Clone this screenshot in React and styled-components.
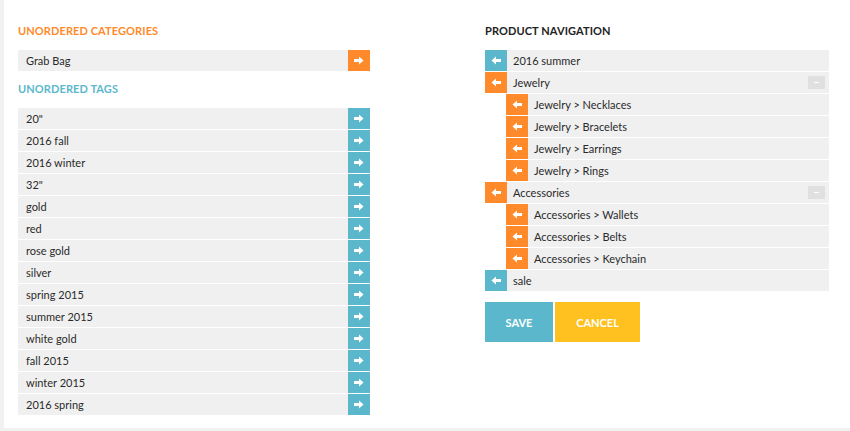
import React from 'react';
import styled, { createGlobalStyle } from 'styled-components';

const GlobalStyle = createGlobalStyle`
  body {
    margin: 0;
    background: #f1f1f1;
    font-family: Lato, "Open Sans", Arial, sans-serif;
  }
`;

const BLUE = '#5bb8cc';
const ORANGE = '#ff8a2b';
const YELLOW = '#ffc11f';

const Panel = styled.div`
  margin-left: 4px;
  height: 428px;
  background: #fff;
  display: flex;
  padding-top: 24px;
  box-sizing: border-box;
`;

const Column = styled.div`
  width: ${p => p.$width}px;
  margin-left: ${p => p.$offset}px;
  display: flex;
  flex-direction: column;
`;

const Heading = styled.h2`
  margin: ${p => p.$top || 0}px 0 12px 0;
  font-size: 11px;
  line-height: 14px;
  font-weight: 700;
  text-transform: uppercase;
  color: ${p => p.$color};
  letter-spacing: 0.1px;
`;

const List = styled.div`
  display: flex;
  flex-direction: column;
  gap: 1px;
`;

const Row = styled.div`
  display: flex;
  align-items: center;
  height: 21px;
  background: #f0f0f0;
  font-size: 11px;
  color: #2a2a2a;
  margin-left: ${p => (p.$indent ? 21 : 0)}px;
`;

const Label = styled.span`
  flex: 1;
  padding-left: ${p => p.$pad}px;
  white-space: nowrap;
`;

const ArrowBtn = styled.div`
  width: 22px;
  height: 21px;
  background: ${p => p.$color};
  display: flex;
  align-items: center;
  justify-content: center;
  flex: none;
`;

const Collapse = styled.div`
  width: 17px;
  height: 13px;
  background: #e0e0e0;
  margin-right: 4px;
  display: flex;
  align-items: center;
  justify-content: center;
  &::after {
    content: '';
    width: 5px;
    height: 1px;
    background: #fff;
  }
`;

const Actions = styled.div`
  display: flex;
  gap: 2px;
  margin-top: 11px;
`;

const ActionBtn = styled.button`
  height: 40px;
  width: ${p => p.$w}px;
  border: none;
  background: ${p => p.$color};
  color: #fff;
  font-family: Lato, Arial, sans-serif;
  font-size: 11px;
  font-weight: 700;
  text-transform: uppercase;
  padding: 0;
`;

const Arrow = ({ dir }) => (
  <svg width="10" height="9" viewBox="0 0 10 9">
    {dir === 'right' ? (
      <polygon points="0,3 5,3 5,0.5 9.5,4.5 5,8.5 5,6 0,6" fill="#fff" />
    ) : (
      <polygon points="10,3 5,3 5,0.5 0.5,4.5 5,8.5 5,6 10,6" fill="#fff" />
    )}
  </svg>
);

const tags = [
  '20"', '2016 fall', '2016 winter', '32"', 'gold', 'red', 'rose gold',
  'silver', 'spring 2015', 'summer 2015', 'white gold', 'fall 2015',
  'winter 2015', '2016 spring',
];

const nav = [
  { name: '2016 summer', color: BLUE },
  { name: 'Jewelry', color: ORANGE, parent: true },
  { name: 'Jewelry > Necklaces', color: ORANGE, child: true },
  { name: 'Jewelry > Bracelets', color: ORANGE, child: true },
  { name: 'Jewelry > Earrings', color: ORANGE, child: true },
  { name: 'Jewelry > Rings', color: ORANGE, child: true },
  { name: 'Accessories', color: ORANGE, parent: true },
  { name: 'Accessories > Wallets', color: ORANGE, child: true },
  { name: 'Accessories > Belts', color: ORANGE, child: true },
  { name: 'Accessories > Keychain', color: ORANGE, child: true },
  { name: 'sale', color: BLUE },
];

export default function App() {
  return (
    <>
      <GlobalStyle />
      <Panel>
        <Column $width={352} $offset={14}>
          <Heading $color={ORANGE}>Unordered Categories</Heading>
          <List>
            <Row>
              <Label $pad={8}>Grab Bag</Label>
              <ArrowBtn $color={ORANGE}><Arrow dir="right" /></ArrowBtn>
            </Row>
          </List>
          <Heading $color={BLUE} $top={11}>Unordered Tags</Heading>
          <List>
            {tags.map(t => (
              <Row key={t}>
                <Label $pad={8}>{t}</Label>
                <ArrowBtn $color={BLUE}><Arrow dir="right" /></ArrowBtn>
              </Row>
            ))}
          </List>
        </Column>
        <Column $width={344} $offset={115}>
          <Heading $color="#222">Product Navigation</Heading>
          <List>
            {nav.map(n => (
              <Row key={n.name} $indent={n.child}>
                <ArrowBtn $color={n.color}><Arrow dir="left" /></ArrowBtn>
                <Label $pad={6}>{n.name}</Label>
                {n.parent && <Collapse />}
              </Row>
            ))}
          </List>
          <Actions>
            <ActionBtn $w={68} $color={BLUE}>Save</ActionBtn>
            <ActionBtn $w={85} $color={YELLOW}>Cancel</ActionBtn>
          </Actions>
        </Column>
      </Panel>
    </>
  );
}
